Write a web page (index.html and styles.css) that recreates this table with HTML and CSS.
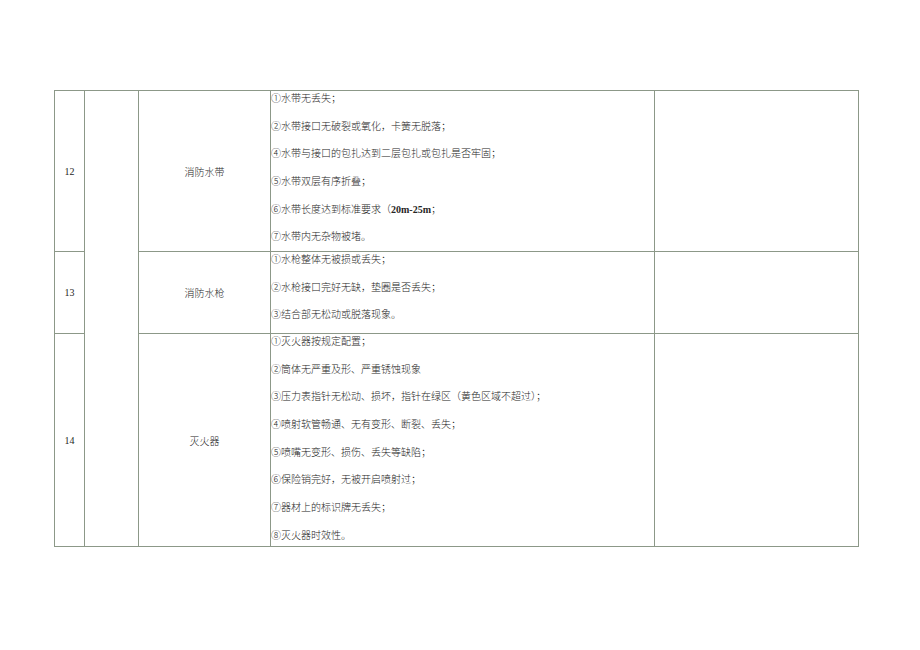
FILE: index.html
```html
<!DOCTYPE html>
<html lang="zh">
<head>
<meta charset="utf-8">
<title>消防器材检查表</title>
<link rel="stylesheet" href="styles.css">
</head>
<body>
<table class="sheet">
  <colgroup>
    <col class="c-no">
    <col class="c-cat">
    <col class="c-item">
    <col class="c-std">
    <col class="c-note">
  </colgroup>
  <tbody>
    <tr class="r12">
      <td class="no">12</td>
      <td class="cat" rowspan="3"></td>
      <td class="item">消防水带</td>
      <td class="std">
        <div class="list">
          <div class="ln">①水带无丢失；</div>
          <div class="ln">②水带接口无破裂或氧化，卡簧无脱落；</div>
          <div class="ln">④水带与接口的包扎达到二层包扎或包扎是否牢固；</div>
          <div class="ln">⑤水带双层有序折叠；</div>
          <div class="ln">⑥水带长度达到标准要求（<span class="lat">20m-25m</span>；</div>
          <div class="ln">⑦水带内无杂物被堵。</div>
        </div>
      </td>
      <td class="note"></td>
    </tr>
    <tr class="r13">
      <td class="no">13</td>
      <td class="item">消防水枪</td>
      <td class="std">
        <div class="list">
          <div class="ln">①水枪整体无被损或丢失；</div>
          <div class="ln">②水枪接口完好无缺，垫圈是否丢失；</div>
          <div class="ln">③结合部无松动或脱落现象。</div>
        </div>
      </td>
      <td class="note"></td>
    </tr>
    <tr class="r14">
      <td class="no">14</td>
      <td class="item">灭火器</td>
      <td class="std">
        <div class="list">
          <div class="ln">①灭火器按规定配置；</div>
          <div class="ln">②筒体无严重及形、严重锈蚀现象</div>
          <div class="ln">③压力表指针无松动、损坏，指针在绿区（黄色区域不超过）；</div>
          <div class="ln">④喷射软管畅通、无有变形、断裂、丢失；</div>
          <div class="ln">⑤喷嘴无变形、损伤、丢失等缺陷；</div>
          <div class="ln">⑥保险销完好，无被开启喷射过；</div>
          <div class="ln">⑦器材上的标识牌无丢失；</div>
          <div class="ln">⑧灭火器时效性。</div>
        </div>
      </td>
      <td class="note"></td>
    </tr>
  </tbody>
</table>
</body>
</html>
```
FILE: styles.css
```css
html, body {
  margin: 0;
  padding: 0;
  background: #ffffff;
}

body {
  padding: 90px 0 0 54px;
  font-family: "Liberation Serif", "Noto Sans CJK SC", serif;
  font-size: 10px;
  color: #262626;
}

.sheet {
  border-collapse: collapse;
  table-layout: fixed;
  width: 805px;
}

.c-no { width: 30px; }
.c-cat { width: 54px; }
.c-item { width: 132px; }
.c-std { width: 384px; }
.c-note { width: 204px; }

.sheet td {
  border: 1px solid #8c9888;
  padding: 0;
}

.r12 { height: 161px; }
.r13 { height: 82px; }
.r14 { height: 213px; }

.no {
  text-align: center;
  vertical-align: middle;
  font-size: 10px;
  padding-right: 2px;
}

.item {
  text-align: center;
  vertical-align: middle;
  font-family: "Noto Sans CJK SC", serif;
  font-weight: 300;
}

.std {
  vertical-align: top;
}

.list {
  display: flex;
  flex-direction: column;
  gap: 15.7px;
  padding: 1px 0 0 0;
}

.ln {
  height: 12px;
  line-height: 12px;
  white-space: nowrap;
  font-family: "Noto Sans CJK SC", serif;
  font-weight: 300;
}

.lat {
  font-family: "Liberation Serif", serif;
  font-weight: 700;
}
```
